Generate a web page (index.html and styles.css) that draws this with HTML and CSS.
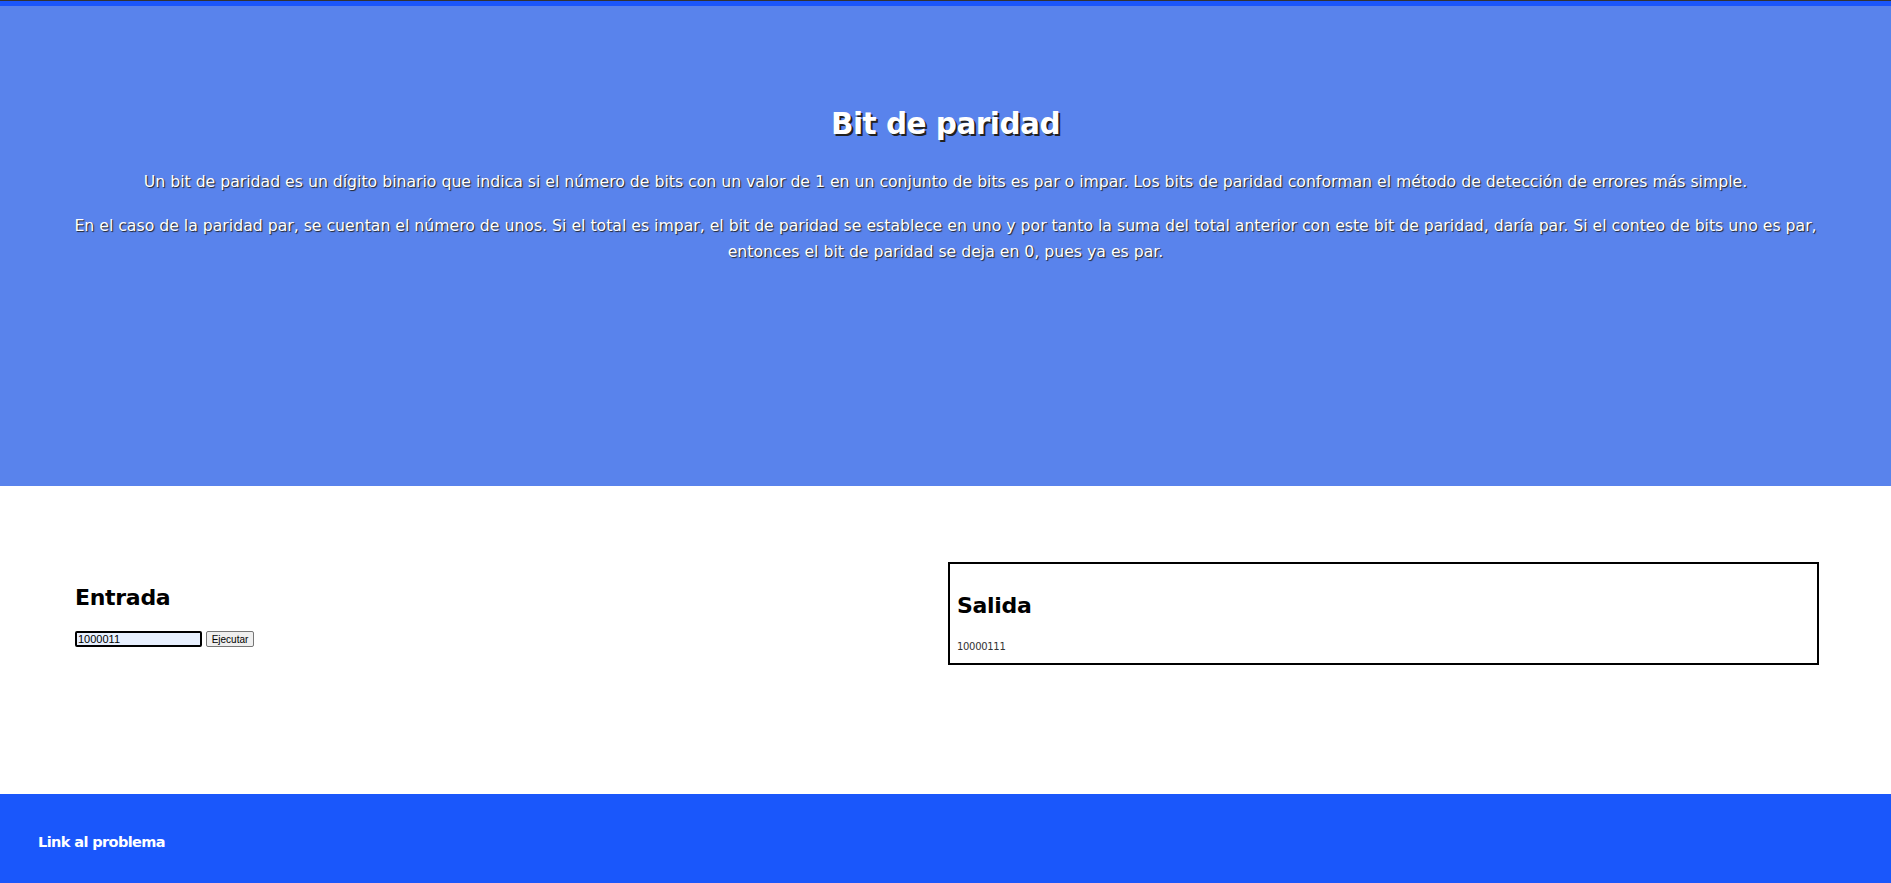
FILE: index.html
```html
<!DOCTYPE html>
<html lang="es">
<head>
<meta charset="utf-8">
<title>Bit de paridad</title>
<link rel="stylesheet" href="styles.css">
</head>
<body>
<div class="topline"></div>
<header class="hero">
  <h1 class="hero-title">Bit de paridad</h1>
  <p class="hero-text">Un bit de paridad es un dígito binario que indica si el número de bits con un valor de 1 en un conjunto de bits es par o impar. Los bits de paridad conforman el método de detección de errores más simple.</p>
  <p class="hero-text">En el caso de la paridad par, se cuentan el número de unos. Si el total es impar, el bit de paridad se establece en uno y por tanto la suma del total anterior con este bit de paridad, daría par. Si el conteo de bits uno es par, entonces el bit de paridad se deja en 0, pues ya es par.</p>
</header>
<main class="work">
  <section class="col col-in">
    <h2 class="col-title">Entrada</h2>
    <div class="form-row">
      <input class="bits-input" type="text" value="1000011">
      <button class="run-btn" type="button">Ejecutar</button>
    </div>
  </section>
  <section class="col col-out">
    <h2 class="col-title">Salida</h2>
    <p class="out-text">10000111</p>
  </section>
</main>
<footer class="foot">
  <a class="foot-link" href="#">Link al problema</a>
</footer>
</body>
</html>
```

FILE: styles.css
```css
* { box-sizing: border-box; }
html, body { margin: 0; padding: 0; }
body {
  font-family: "DejaVu Sans", "Noto Sans", sans-serif;
  background: #ffffff;
  color: #000;
  min-height: 883px;
  display: flex;
  flex-direction: column;
}
.topline {
  height: 6px;
  background: #1a56fb;
  border-top: 1px solid #333;
}
.hero {
  background: #5983ec;
  height: 480px;
  padding: 100px 48px 0;
  text-align: center;
  color: #fff;
}
.hero-title {
  margin: 0 0 27px;
  font-size: 29.5px;
  font-weight: 700;
  letter-spacing: -0.5px;
  text-shadow: 2px 2px 0 #222;
  line-height: 36px;
}
.hero-text {
  margin: 0 0 17px;
  font-size: 15.7px;
  line-height: 26.5px;
  text-shadow: 1px 1px 1px #222;
}
.work {
  display: grid;
  grid-template-columns: 1fr 1fr;
  column-gap: 2px;
  align-items: center;
  padding: 76px 72px 129px 75px;
}
.col-title {
  margin: 0;
  font-size: 22px;
  font-weight: 700;
  line-height: 36px;
  letter-spacing: -0.3px;
}
.col-in .col-title { margin-bottom: 15px; }
.form-row { display: flex; align-items: center; gap: 4px; }
.bits-input {
  width: 127px;
  height: 16px;
  border: 2px solid #000;
  border-radius: 2px;
  background: #e8f0fe;
  font: 11px "Liberation Sans", Arial, sans-serif;
  padding: 0 1px;
  outline: none;
}
.run-btn {
  height: 16px;
  width: 48px;
  padding: 0 2px;
  font: 10px "Liberation Sans", Arial, sans-serif;
  background: #efefef;
  border: 1px solid #767676;
  border-radius: 2px;
  color: #000;
}
.col-out {
  border: 2px solid #000;
  padding: 24px 7px 5px;
  height: 103px;
}
.out-text {
  margin: 17px 0 0;
  font-size: 10px;
  color: #333;
  letter-spacing: -0.3px;
}
.foot {
  background: #1a57fb;
  height: 90px;
  margin-top: auto;
  display: flex;
  align-items: center;
  padding: 5px 38px 0;
}
.foot-link {
  color: #fff;
  text-decoration: none;
  font-weight: 700;
  font-size: 14.5px;
  letter-spacing: -0.6px;
}
```
